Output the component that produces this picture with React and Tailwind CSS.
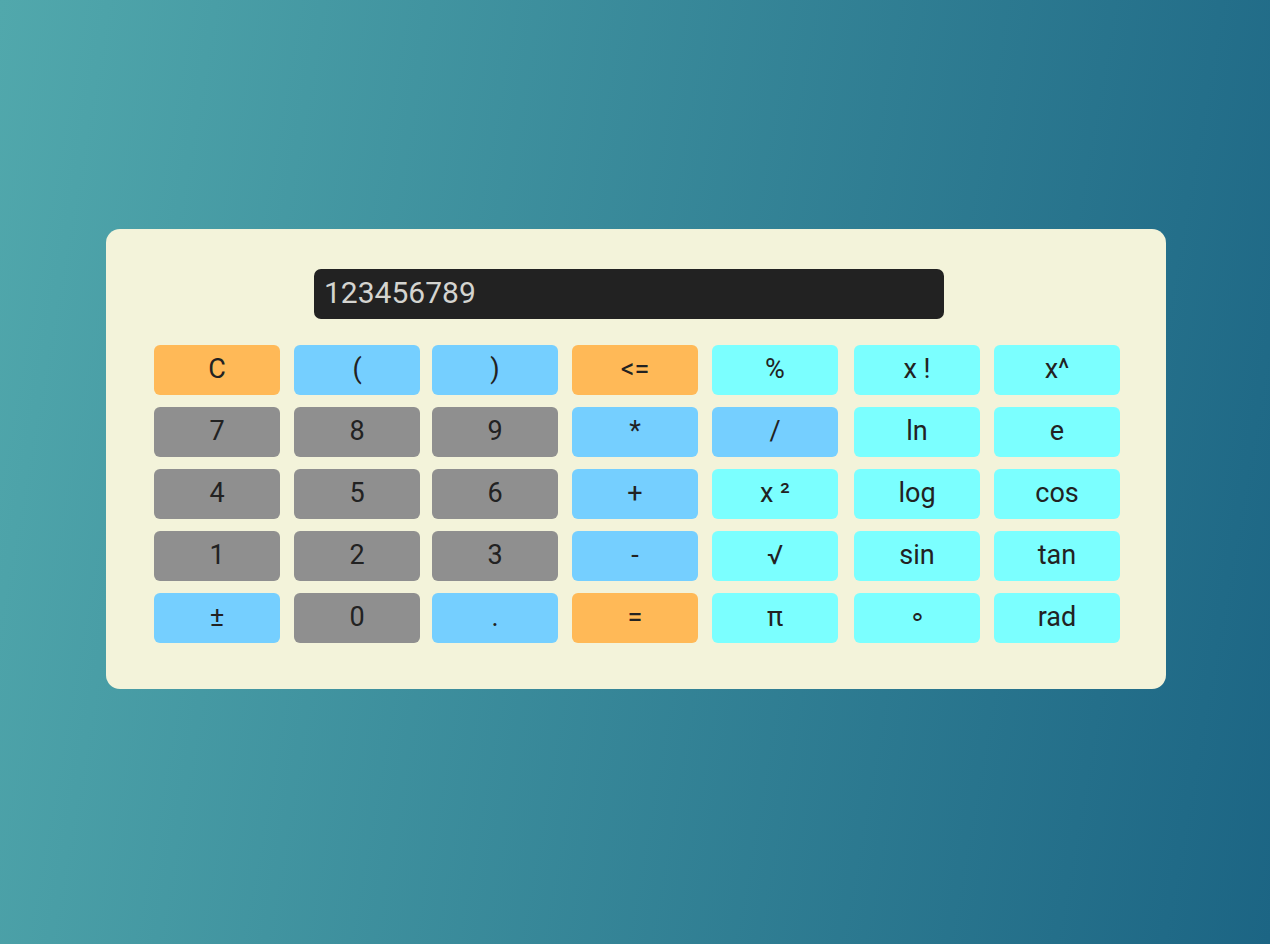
import React from "react";

const O = "bg-[#ffb957]";
const B = "bg-[#75cfff]";
const C = "bg-[#7bffff]";
const G = "bg-[#8f8f8f]";

const keys = [
  ["C", O], ["(", B], [")", B], ["<=", O], ["%", C], ["x !", C], ["x^", C],
  ["7", G], ["8", G], ["9", G], ["*", B], ["/", B], ["ln", C], ["e", C],
  ["4", G], ["5", G], ["6", G], ["+", B], ["x ²", C], ["log", C], ["cos", C],
  ["1", G], ["2", G], ["3", G], ["-", B], ["√", C], ["sin", C], ["tan", C],
  ["±", B], ["0", G], [".", B], ["=", O], ["π", C], ["∘", C], ["rad", C],
];

export default function App() {
  return (
    <div
      className="w-[1270px] h-[944px] bg-[linear-gradient(100deg,#51a8ac_0%,#1c6584_100%)] pt-[229px] pl-[106px]"
      style={{ fontFamily: "Roboto, 'Liberation Sans', sans-serif" }}
    >
      <div className="w-[1060px] h-[460px] bg-[#f3f3da] rounded-[14px] pt-[40px] pl-[48px]">
        <div className="ml-[160px] w-[630px] h-[50px] bg-[#222222] rounded-[7px] flex items-center pl-[10px] pb-[3px] text-[30px] leading-none text-[#d4d4d0]">
          123456789
        </div>
        <div className="mt-[26px] grid grid-cols-[140px_138px_140px_140px_142px_140px_126px] auto-rows-[50px] gap-y-[12px]">
          {keys.map(([label, bg], i) => (
            <div
              key={i}
              className={`${bg} w-[126px] rounded-[6px] flex items-center justify-center pb-[2px] text-[27px] text-[#222222] leading-none`}
            >
              {label}
            </div>
          ))}
        </div>
      </div>
    </div>
  );
}
